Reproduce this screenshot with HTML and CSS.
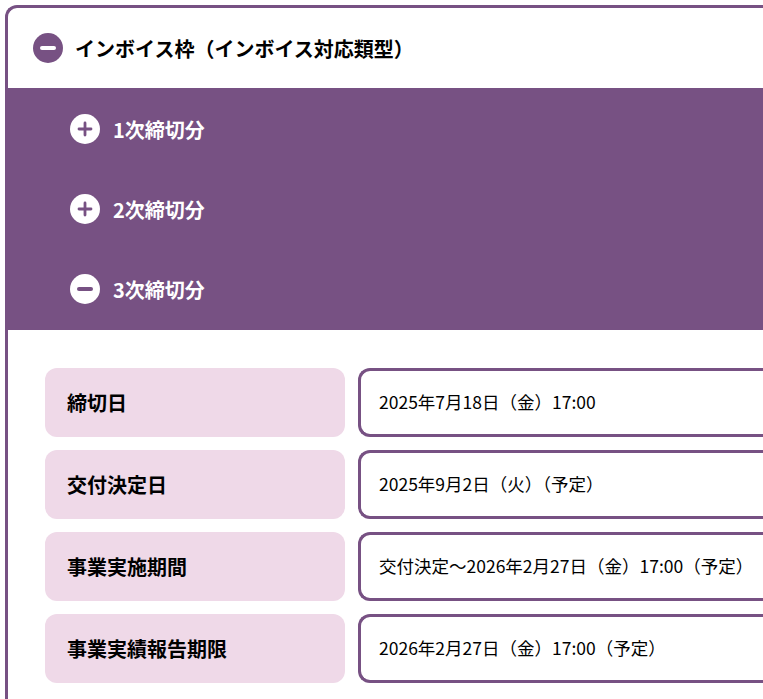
FILE: index.html
```html
<!DOCTYPE html>
<html lang="ja">
<head>
<meta charset="utf-8">
<title>インボイス枠</title>
<link rel="stylesheet" href="styles.css">
</head>
<body>
<section class="panel">
  <header class="panel-head">
    <span class="toggle toggle-dark"><svg viewBox="0 0 30 30"><path class="bar-thick" d="M9 15h12" /></svg></span>
    <h2 class="panel-title">インボイス枠（インボイス対応類型）</h2>
  </header>
  <div class="rounds">
    <div class="round"><span class="toggle toggle-light"><svg viewBox="0 0 30 30"><path d="M9 15h12M15 9v12" /></svg></span><span class="round-label">1次締切分</span></div>
    <div class="round"><span class="toggle toggle-light"><svg viewBox="0 0 30 30"><path d="M9 15h12M15 9v12" /></svg></span><span class="round-label">2次締切分</span></div>
    <div class="round"><span class="toggle toggle-light"><svg viewBox="0 0 30 30"><path class="bar-thick" d="M9 15h12" /></svg></span><span class="round-label">3次締切分</span></div>
  </div>
  <dl class="details">
    <div class="row"><dt>締切日</dt><dd>2025年7月18日（金）17:00</dd></div>
    <div class="row"><dt>交付決定日</dt><dd>2025年9月2日（火）（予定）</dd></div>
    <div class="row"><dt>事業実施期間</dt><dd>交付決定～2026年2月27日（金）17:00（予定）</dd></div>
    <div class="row"><dt>事業実績報告期限</dt><dd>2026年2月27日（金）17:00（予定）</dd></div>
  </dl>
</section>
</body>
</html>
```
FILE: styles.css
```css
* { box-sizing: border-box; }
html, body { margin: 0; padding: 0; }
body {
  width: 763px;
  height: 699px;
  overflow: hidden;
  background: #fff;
  padding: 5px 0 0 5px;
  font-family: "Noto Sans CJK JP", "Noto Sans", sans-serif;
  color: #000;
}
.panel {
  width: 758px;
  height: 694px;
  border: 3px solid #775183;
  border-width: 3px 0 0 3px;
  border-radius: 12px 0 0 0;
  background: #fff;
}
.panel-head {
  display: flex;
  align-items: center;
  gap: 12px;
  height: 80px;
  padding-left: 25px;
}
.panel-title { margin: 2px 0 0; font-size: 20px; font-weight: 700; line-height: 1.5; }
.toggle { width: 30px; height: 30px; border-radius: 50%; display: block; flex: none; }
.toggle svg { display: block; width: 30px; height: 30px; fill: none; stroke-width: 2.8; stroke-linecap: round; }
.toggle svg .bar-thick { stroke-width: 4; }
.toggle-dark { background: #775183; }
.toggle-dark svg { stroke: #fff; }
.toggle-light { background: #fff; }
.toggle-light svg { stroke: #775183; }
.rounds { background: #775183; height: 242px; margin-left: -1px; padding-top: 1px; }
.round { display: flex; align-items: center; gap: 13px; height: 80px; padding-left: 63px; color: #fff; }
.round-label { font-size: 20px; font-weight: 700; line-height: 1.5; margin-top: 1px; }
.details { margin: 0; padding: 38px 0 0 37px; display: flex; flex-direction: column; gap: 13px; }
.row { display: flex; gap: 13px; height: 69px; }
.row dt { flex: none; width: 300px; background: #efd9e8; border-radius: 12px; display: flex; align-items: center; padding-left: 22px; font-size: 20px; font-weight: 700; }
.row dd { margin: 0; flex: 1; border: 3px solid #775183; border-right: 0; border-radius: 12px 0 0 12px; display: flex; align-items: center; padding: 0 0 3px 18px; font-size: 17.5px; }
```
